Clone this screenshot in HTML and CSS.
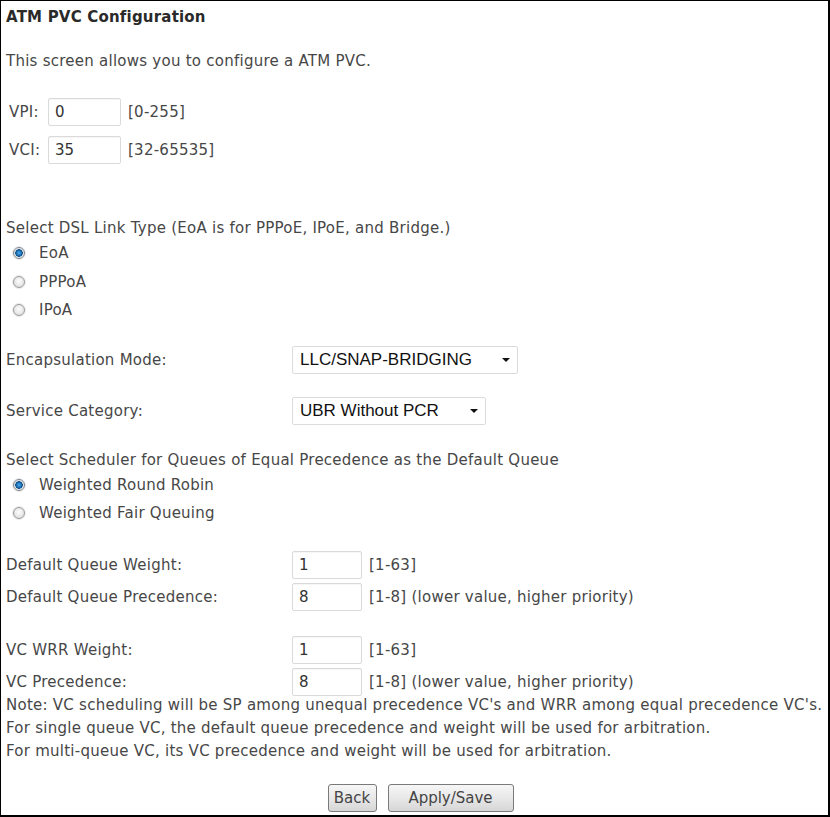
FILE: index.html
```html
<!DOCTYPE html>
<html lang="en">
<head>
    <meta charset="UTF-8">
    <title>ATM PVC Configuration</title>
    <link rel="stylesheet" href="styles.css">
</head>
<body>
<div class="frame">
    <div class="title">ATM PVC Configuration</div>
    <p class="intro">This screen allows you to configure a ATM PVC.</p>

    <div class="vgroup">
        <div class="vrow">
            <span class="vlabel">VPI:</span>
            <input type="text" class="txt small" value="0">
            <span class="hint">[0-255]</span>
        </div>
        <div class="vrow">
            <span class="vlabel">VCI:</span>
            <input type="text" class="txt small" value="35">
            <span class="hint">[32-65535]</span>
        </div>
    </div>

    <div class="group link-type">
        <div class="line">Select DSL Link Type (EoA is for PPPoE, IPoE, and Bridge.)</div>
        <label class="radio"><input type="radio" name="linktype" checked> EoA</label>
        <label class="radio"><input type="radio" name="linktype"> PPPoA</label>
        <label class="radio"><input type="radio" name="linktype"> IPoA</label>
    </div>

    <div class="frow encap">
        <span class="flabel">Encapsulation Mode:</span>
        <div class="sel wide">LLC/SNAP-BRIDGING<span class="caret"></span></div>
    </div>
    <div class="frow service">
        <span class="flabel">Service Category:</span>
        <div class="sel narrow">UBR Without PCR<span class="caret"></span></div>
    </div>

    <div class="group sched">
        <div class="line">Select Scheduler for Queues of Equal Precedence as the Default Queue</div>
        <label class="radio"><input type="radio" name="sched" checked> Weighted Round Robin</label>
        <label class="radio"><input type="radio" name="sched"> Weighted Fair Queuing</label>
    </div>

    <div class="qgroup">
        <div class="qrow">
            <span class="flabel">Default Queue Weight:</span>
            <input type="text" class="txt" value="1">
            <span class="hint">[1-63]</span>
        </div>
        <div class="qrow">
            <span class="flabel">Default Queue Precedence:</span>
            <input type="text" class="txt" value="8">
            <span class="hint">[1-8] (lower value, higher priority)</span>
        </div>
    </div>

    <div class="qgroup second">
        <div class="qrow">
            <span class="flabel">VC WRR Weight:</span>
            <input type="text" class="txt" value="1">
            <span class="hint">[1-63]</span>
        </div>
        <div class="qrow">
            <span class="flabel">VC Precedence:</span>
            <input type="text" class="txt" value="8">
            <span class="hint">[1-8] (lower value, higher priority)</span>
        </div>
    </div>

    <div class="note">
        <div>Note: VC scheduling will be SP among unequal precedence VC's and WRR among equal precedence VC's.</div>
        <div>For single queue VC, the default queue precedence and weight will be used for arbitration.</div>
        <div>For multi-queue VC, its VC precedence and weight will be used for arbitration.</div>
    </div>

    <div class="buttons">
        <input type="button" class="btn back" value="Back">
        <input type="button" class="btn apply" value="Apply/Save">
    </div>
</div>
</body>
</html>
```

FILE: styles.css
```css
html, body {
    margin: 0;
    padding: 0;
    background: #fff;
}
body {
    font-family: "DejaVu Sans", Tahoma, sans-serif;
    font-size: 15px;
    letter-spacing: 0.25px;
    color: #474747;
}
.frame {
    box-sizing: border-box;
    width: 830px;
    height: 817px;
    border-top: 1px solid #000;
    border-left: 1px solid #000;
    border-right: 2px solid #000;
    border-bottom: 2px solid #000;
    padding: 5px 0 0 5px;
}
.title {
    font-weight: bold;
    color: #2a2a2a;
    height: 22px;
    line-height: 22px;
    letter-spacing: 0.2px;
}
.intro {
    margin: 22px 0 0 0;
    height: 22px;
    line-height: 22px;
}
.vgroup {
    margin-top: 21px;
    padding-left: 3px;
}
.vrow {
    display: flex;
    align-items: center;
    height: 38px;
}
.vlabel {
    width: 39px;
}
.txt {
    box-sizing: border-box;
    width: 73px;
    height: 28px;
    border: 1px solid #dadada;
    border-radius: 2px;
    padding: 0 6px;
    font-family: "DejaVu Sans", Tahoma, sans-serif;
    font-size: 15px;
    color: #333;
    box-shadow: inset 0 1px 1px rgba(0, 0, 0, .04);
}
.hint {
    margin-left: 7px;
}
.group .line {
    height: 22px;
    line-height: 22px;
}
.link-type {
    margin-top: 48px;
}
.radio {
    display: flex;
    align-items: center;
    height: 28.5px;
    padding-left: 7px;
}
.radio input {
    appearance: none;
    box-sizing: border-box;
    width: 12px;
    height: 12px;
    margin: 0 14px 0 0;
    border: 1px solid #9a9a9a;
    border-radius: 50%;
    background: radial-gradient(circle at 50% 40%, #fdfdfd, #d8d8d8);
    box-shadow: 0 0 0 1px #ececec;
}
.radio input:checked {
    border-color: #7b8590;
    background: radial-gradient(circle, #4ab1f0 0, #1a6db0 2.5px, #0f4f8a 3.5px, #dcdcdc 4px, #f4f4f4 5px);
}
.frow {
    display: flex;
    align-items: center;
    height: 28px;
}
.encap {
    margin-top: 21px;
}
.service {
    margin-top: 23px;
}
.flabel {
    width: 286px;
    flex: none;
}
.sel {
    box-sizing: border-box;
    height: 28px;
    border: 1px solid #dcdcdc;
    border-radius: 2px;
    padding: 0 7px 0 7px;
    display: flex;
    align-items: center;
    justify-content: space-between;
    font-family: "Liberation Sans", Arial, sans-serif;
    font-size: 17px;
    letter-spacing: 0;
    color: #111;
}
.wide {
    width: 226px;
}
.narrow {
    width: 194px;
}
.caret {
    width: 0;
    height: 0;
    border-left: 4px solid transparent;
    border-right: 4px solid transparent;
    border-top: 4px solid #111;
}
.sched {
    margin-top: 24px;
}
.qgroup {
    margin-top: 21px;
}
.qgroup.second {
    margin-top: 21px;
}
.qrow {
    display: flex;
    align-items: center;
    height: 32px;
}
.qrow .txt {
    width: 70px;
}
.note {
    margin-top: -4px;
    line-height: 23px;
}
.buttons {
    display: flex;
    justify-content: center;
    gap: 11px;
    margin-top: 21px;
    padding-left: 7px;
}
.btn {
    box-sizing: border-box;
    height: 28px;
    border: 1px solid #7a7a7a;
    border-radius: 3px;
    background: linear-gradient(#f6f6f6 0, #e8e8e8 50%, #d6d6d6 100%);
    font-family: "DejaVu Sans", Tahoma, sans-serif;
    font-size: 15px;
    color: #444;
    padding: 0;
}
.back {
    width: 49px;
}
.apply {
    width: 126px;
}
```
